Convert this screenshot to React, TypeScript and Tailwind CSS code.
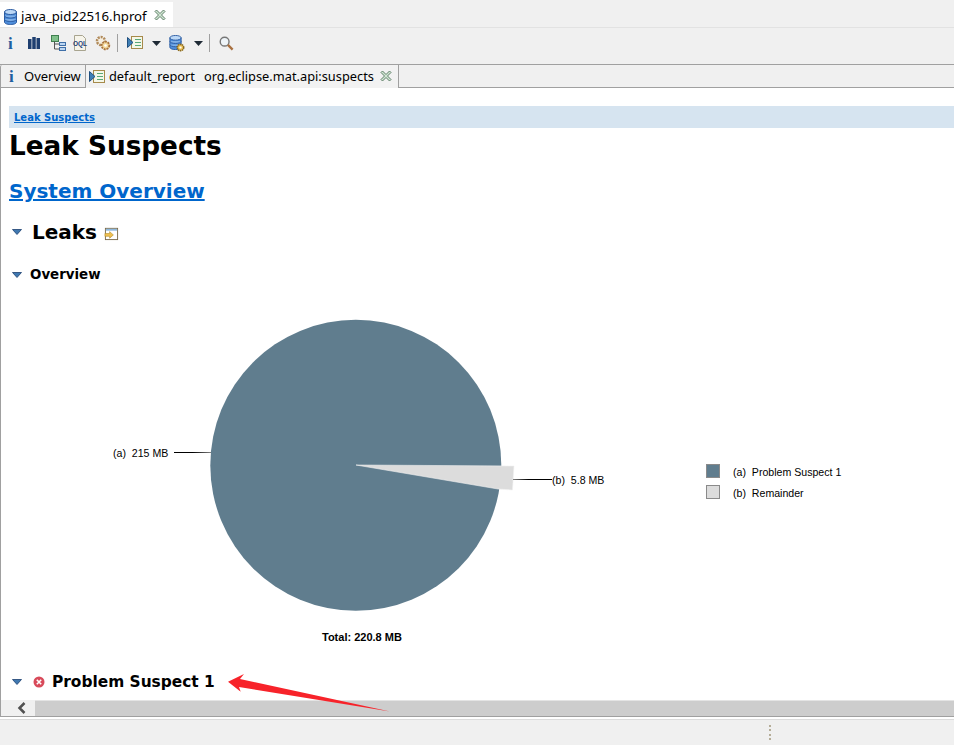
const UI_FONT = "font-['Noto_Sans',sans-serif]";
const DOC_FONT = "font-['DejaVu_Sans',sans-serif]";

function DbIcon({ className = '' }: { className?: string }) {
  return (
    <svg viewBox="0 0 13 16" className={className}>
      <path d="M0.500 3v10c0 1.500 2.500 2.500 6 2.500s6-1 6-2.500V3z" fill="#4f8fdc" stroke="#2a5aa0" />
      <ellipse cx="6.500" cy="3" rx="6" ry="2.500" fill="#bcd8f6" stroke="#2a5aa0" />
      <path d="M0.500 6.500c0 1.500 2.500 2.500 6 2.500s6-1 6-2.500M0.500 10c0 1.500 2.500 2.500 6 2.500s6-1 6-2.500" fill="#7fb0e8" stroke="#2a5aa0" />
    </svg>
  );
}

function ReportIcon() {
  return (
    <svg viewBox="0 0 16 16" className="w-4 h-4 shrink-0">
      <rect x="4.500" y="1.500" width="11" height="12" fill="#f4f7e8" stroke="#a68a4a" />
      <path d="M8 4.500h6M8 7.500h6M8 10.500h6" stroke="#5aa878" strokeWidth="1.200" />
      <path d="M0.500 2.500l5.500 5-5.500 5z" fill="#3f7fb5" stroke="#1f4f7f" />
    </svg>
  );
}

function CloseIcon() {
  return (
    <svg viewBox="0 0 12 12" className="w-3 h-3 shrink-0">
      <path
        d="M1 2.500L2.500 1 6 4.500 9.500 1 11 2.500 7.500 6 11 9.500 9.500 11 6 7.500 2.500 11 1 9.500 4.500 6z"
        fill="#cfe5d2"
        stroke="#5f7f68"
        strokeWidth="1"
      />
    </svg>
  );
}

function Caret() {
  return (
    <svg viewBox="0 0 9 5" className="w-[9px] h-[5px] shrink-0">
      <path d="M0 0h9L4.500 5z" fill="#1f2a35" />
    </svg>
  );
}

function Twistie() {
  return (
    <svg viewBox="0 0 10 6" className="w-[10px] h-[6px] shrink-0">
      <path d="M0.500 0.500h9L5 5.500z" fill="#3f78b0" stroke="#1c3f70" strokeWidth="0.800" />
    </svg>
  );
}

function Separator() {
  return <div className="w-px h-[18px] bg-[#a0a0a0]" />;
}

function InfoGlyph() {
  return <span className="block w-[6px] text-[#1f5f9f] font-['Liberation_Serif',serif] font-bold text-[17px] leading-none">i</span>;
}

function Toolbar() {
  return (
    <div className="h-[30px] bg-[#f0f0f0] flex items-center">
      <div className="ml-[8px]"><InfoGlyph /></div>
      <svg viewBox="0 0 12 12" className="ml-[14px] w-[12px] h-[12px]">
        <path d="M0 2h3.500v10H0zM4.250 0h3.500v12h-3.500zM8.500 1H12v11H8.500z" fill="#1f3f70" />
      </svg>
      <svg viewBox="0 0 16 16" className="ml-[10px] w-4 h-4">
        <rect x="1.500" y="0.500" width="7" height="6" fill="#7fc08a" stroke="#3f7f4f" />
        <rect x="9.500" y="7.500" width="6" height="3" fill="#bcd6f2" stroke="#3f6fa8" />
        <rect x="9.500" y="12.500" width="6" height="3" fill="#bcd6f2" stroke="#3f6fa8" />
        <path d="M4.500 6.500v7.500h5M4.500 9h5" fill="none" stroke="#555" />
      </svg>
      <svg viewBox="0 0 16 16" className="ml-[6px] w-4 h-4">
        <path d="M2.500 0.500h8l3 3v12h-11z" fill="#f6f4ea" stroke="#a8a48f" />
        <text x="8" y="11" textAnchor="middle" fontFamily="'Liberation Sans',sans-serif" fontWeight="bold" fontSize="6.500" fill="#24407a">OQL</text>
      </svg>
      <svg viewBox="0 0 16 16" className="ml-[7px] w-4 h-4">
        <circle cx="6" cy="6" r="4" fill="#f6efe2" stroke="#b08a5a" strokeWidth="2.500" strokeDasharray="2 1" />
        <circle cx="10.500" cy="10.500" r="3.800" fill="#f2d79a" stroke="#a8743f" strokeWidth="1.800" strokeDasharray="2 0.800" />
        <circle cx="10.500" cy="10.500" r="1.300" fill="#fff" />
      </svg>
      <div className="ml-[6px]"><Separator /></div>
      <div className="ml-[9px]"><ReportIcon /></div>
      <div className="ml-[9px]"><Caret /></div>
      <div className="ml-[8px] relative w-[16px] h-[17px]">
        <DbIcon className="w-[13px] h-[15px]" />
        <svg viewBox="0 0 10 10" className="absolute right-0 bottom-0 w-[9px] h-[9px]">
          <circle cx="5" cy="5" r="3.500" fill="#f2c860" stroke="#8a6a20" strokeWidth="1.800" strokeDasharray="1.600 0.600" />
          <circle cx="5" cy="5" r="1.200" fill="#fff" />
        </svg>
      </div>
      <div className="ml-[9px]"><Caret /></div>
      <div className="ml-[6px]"><Separator /></div>
      <svg viewBox="0 0 16 16" className="ml-[9px] w-[15px] h-[15px]">
        <circle cx="6" cy="6" r="4.700" fill="#eef4f8" stroke="#777" strokeWidth="1.500" />
        <path d="M9.500 9.500l5 5" stroke="#a8703f" strokeWidth="2.500" />
      </svg>
    </div>
  );
}

function Pie() {
  return (
    <svg width="945" height="386" viewBox="0 0 945 386" className="block">
      <defs>
        <linearGradient id="lead-a" x1="0" x2="1" y1="0" y2="0">
          <stop offset="0.500" stopColor="#000" />
          <stop offset="1" stopColor="#808080" />
        </linearGradient>
        <linearGradient id="lead-b" x1="0" x2="1" y1="0" y2="0">
          <stop offset="0" stopColor="#808080" />
          <stop offset="0.400" stopColor="#000" />
        </linearGradient>
      </defs>
      <circle cx="354.800" cy="177.300" r="145.500" fill="#607d8e" />
      <path d="M355 177L513 178L511.500 202L497 201Z" fill="#dcdcdc" stroke="#f2f2f2" strokeWidth="0.600" />
      <rect x="173" y="164" width="37" height="1" fill="url(#lead-a)" />
      <rect x="512" y="191" width="39" height="1" fill="url(#lead-b)" />
      <g fontFamily="'Liberation Sans',sans-serif" fontSize="10.600" fill="#000">
        <text x="112" y="169">{'(a)\u00a0\u00a0215 MB'}</text>
        <text x="551" y="196">{'(b)\u00a0\u00a05.8 MB'}</text>
        <text x="732" y="188">{'(a)\u00a0\u00a0Problem Suspect 1'}</text>
        <text x="732" y="209">{'(b)\u00a0\u00a0Remainder'}</text>
        <text x="321" y="353" fontWeight="bold" fontSize="11">Total: 220.8 MB</text>
      </g>
      <rect x="705.500" y="176.500" width="13" height="13" fill="#607d8e" stroke="#8a8a8a" />
      <rect x="705.500" y="197.500" width="13" height="13" fill="#dcdcdc" stroke="#8a8a8a" />
    </svg>
  );
}

export default function App() {
  return (
    <div className={`relative w-[954px] h-[745px] overflow-hidden bg-[#f0f0f0] flex flex-col ${UI_FONT}`}>
      <div className="h-[28px] pt-[2px] flex items-stretch bg-[#f0f0f0] border-b border-[#e2e2e2]">
        <div className="w-[173px] bg-white flex items-center pt-[4px] pl-[4px] text-[13.2px] text-black">
          <DbIcon className="w-[13px] h-[16px]" />
          <span className="ml-[4px] whitespace-nowrap">java_pid22516.hprof</span>
          <span className="ml-[7px] mb-[4px]"><CloseIcon /></span>
        </div>
      </div>
      <Toolbar />
      <div className="h-[6px]" />
      <div className="h-[24px] flex items-stretch border-t border-[#a0a0a0] text-[13px] text-black">
        <div className="w-[86px] flex items-center pl-[8px] border-x border-b border-[#a0a0a0] bg-[#f0f0f0] rounded-tl-[2px]">
          <InfoGlyph />
          <span className="ml-[9px] pt-[1px]">Overview</span>
        </div>
        <div className="w-[313px] flex items-center pl-[3px] bg-[#f2f2f2] border-r border-[#a0a0a0] text-[12.8px]">
          <ReportIcon />
          <span className="ml-[4px] pt-[1px] whitespace-nowrap">default_report</span>
          <span className="ml-[9px] pt-[1px] whitespace-nowrap">org.eclipse.mat.api:suspects</span>
          <span className="ml-[6px] mb-[2px]"><CloseIcon /></span>
        </div>
        <div className="flex-1 border-b border-[#a0a0a0]" />
      </div>
      <div className={`h-[612px] bg-white border-l border-[#a0a0a0] overflow-hidden ${DOC_FONT}`}>
        <div className="ml-[8px] mt-[18px] h-[22px] bg-[#d6e4f0] flex items-center pl-[5px]">
          <a className="text-[10px] font-bold text-[#0066cc] underline">Leak Suspects</a>
        </div>
        <h1 className="ml-[8px] mt-[1px] text-[26.3px] leading-[34px] font-bold text-black">Leak Suspects</h1>
        <h2 className="ml-[8px] mt-[15px] text-[20px] leading-[26px] font-bold text-[#0066cc] underline">System Overview</h2>
        <div className="ml-[11px] mt-[15px] flex items-center">
          <Twistie />
          <span className="ml-[10px] text-[20px] leading-[26px] font-bold text-black">Leaks</span>
          <svg viewBox="0 0 16 16" className="ml-[7px] mt-[3px] w-[15px] h-[15px]">
            <rect x="1.500" y="2.500" width="13" height="12" fill="#fff" stroke="#7a6a4a" />
            <rect x="2" y="3" width="12" height="2" fill="#8fb8dc" />
            <path d="M1 8h5V6l4 3.500-4 3.500v-2H1z" fill="#f0c050" stroke="#b08a20" strokeWidth="0.600" />
          </svg>
        </div>
        <div className="ml-[11px] mt-[22px] flex items-center">
          <Twistie />
          <span className="ml-[8px] text-[13.4px] leading-[16px] font-bold text-black">Overview</span>
        </div>
        <div className="mt-[5px]"><Pie /></div>
        <div className="ml-[11px] mt-[-2px] flex items-center">
          <Twistie />
          <svg viewBox="0 0 12 12" className="ml-[11px] w-[12px] h-[12px] shrink-0">
            <circle cx="6" cy="6" r="5.500" fill="#d84a5a" />
            <path d="M3.800 3.800l4.400 4.400M8.200 3.800l-4.400 4.400" stroke="#fff" strokeWidth="1.600" />
          </svg>
          <span className="ml-[7px] text-[15.4px] leading-[20px] font-bold text-black whitespace-nowrap">Problem Suspect 1</span>
        </div>
      </div>
      <div className="h-[16px] flex bg-[#f0f0f0] border-l border-[#a0a0a0]">
        <div className="w-[34px] flex items-center pl-[16px]">
          <svg viewBox="0 0 9 12" className="w-[9px] h-3">
            <path d="M7.500 1L2.500 6l5 5" fill="none" stroke="#505050" strokeWidth="2.500" />
          </svg>
        </div>
        <div className="flex-1 bg-[#cdcdcd] border-t border-[#e4e4e4]" />
      </div>
      <div className="h-[1px] bg-[#a0a0a0]" />
      <div className="h-[2px] bg-white" />
      <div className="h-[1px] bg-[#dcdcdc]" />
      <div className="flex-1 flex items-center bg-[#f0f0f0]">
        <div className="ml-[769px] w-[2px] h-[16px] flex flex-col justify-between">
          <div className="h-[2px] bg-[#b5ad98]" />
          <div className="h-[2px] bg-[#b5ad98]" />
          <div className="h-[2px] bg-[#b5ad98]" />
          <div className="h-[2px] bg-[#b5ad98]" />
        </div>
      </div>
      {/* annotation arrow over the screenshot */}
      <svg viewBox="0 0 165 41" className="absolute left-[226px] top-[672px] w-[165px] h-[41px]">
        <path d="M2 9.700L18 2L14 7L164 39.500L13 15L14.700 19.700Z" fill="#f7232a" />
      </svg>
    </div>
  );
}
